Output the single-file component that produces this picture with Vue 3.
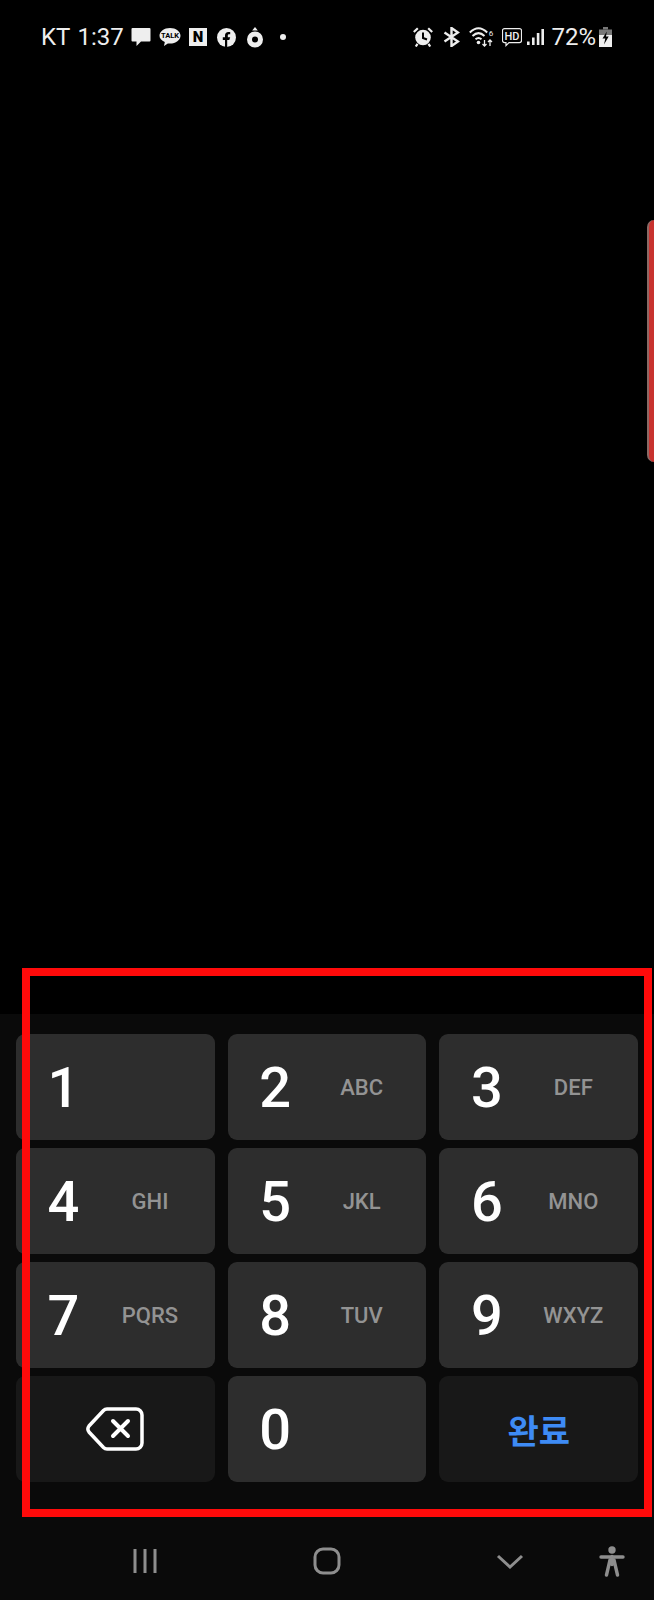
<template>
  <div class="screen">
    <div class="status-bar">
      <span class="status-text carrier">KT</span>
      <span class="status-text clock">1:37</span>
      <svg class="ic-chat" width="20" height="20" viewBox="0 0 20 20"><path d="M1.500 1h17a1 1 0 0 1 1 1v11.500a1 1 0 0 1-1 1H10l-4.500 4.500V14.500h-4a1 1 0 0 1-1-1V2a1 1 0 0 1 1-1z" fill="#eee"/></svg>
      <svg class="ic-talk" width="22" height="20" viewBox="0 0 22 20"><path d="M11 1c5.800 0 10.500 3.500 10.500 7.800S16.800 16.600 11 16.600c-.8 0-1.500-.1-2.200-.2L5 19l.8-4C2.500 13.700.5 11.400.5 8.800.5 4.500 5.200 1 11 1z" fill="#eee"/><text x="11" y="11" text-anchor="middle" class="talk-label">TALK</text></svg>
      <svg class="ic-n" width="18" height="18" viewBox="0 0 18 18"><rect width="18" height="18" fill="#eee"/><text x="9" y="14" text-anchor="middle" class="n-label">N</text></svg>
      <svg class="ic-fb" width="19" height="19" viewBox="0 0 19 19"><circle cx="9.500" cy="9.500" r="9.500" fill="#eee"/><path d="M8 19v-7H5.800V9.300H8V7.400c0-2.300 1.300-3.500 3.400-3.500.9 0 1.800.2 1.800.2v2.200h-1c-1.100 0-1.400.6-1.400 1.300v1.700h2.400L12.300 12h-2.100v7z" fill="#000"/></svg>
      <svg class="ic-ring" width="16" height="21" viewBox="0 0 16 21"><path d="M8 0l2.800 3.500H5.200z" fill="#eee"/><circle cx="8" cy="12.500" r="5.500" fill="none" stroke="#eee" stroke-width="5"/></svg>
      <span class="dot"></span>
      <div class="status-right">
        <svg class="ic-alarm" width="20" height="20" viewBox="0 0 20 20">
          <circle cx="10" cy="10.500" r="7.800" fill="#eee"/>
          <path d="M10 5.500V11L14 12.500" fill="none" stroke="#000" stroke-width="2"/>
          <path d="M.8 5L4.800 1.200M19.200 5L15.200 1.200M4.500 16.800L2.800 19.500M15.500 16.800L17.200 19.500" stroke="#eee" stroke-width="2.200" fill="none"/>
        </svg>
        <svg class="ic-bt" width="17" height="20" viewBox="0 0 17 20"><path d="M1.500 5.500L15 14.500 8.500 19V1L15 5.500 1.500 14.500" fill="none" stroke="#eee" stroke-width="2.400"/></svg>
        <svg class="ic-wifi" width="25" height="20" viewBox="0 0 25 20">
          <path d="M.8 5.500C6.500 0 12.500 0 18.200 5.500M3.500 9C7.500 5.200 11.500 5.200 15.500 9M6.500 12.200C8.500 10.500 10.500 10.500 12.500 12.200" fill="none" stroke="#eee" stroke-width="2"/>
          <circle cx="9.500" cy="15.500" r="1.800" fill="#eee"/>
          <path d="M15.500 13v6M13.500 17l2 2 2-2M21 19v-6M19 15l2-2 2 2" fill="none" stroke="#eee" stroke-width="1.300"/>
          <text x="22" y="9" text-anchor="middle" class="wifi-label">6</text>
        </svg>
        <svg class="ic-hd" width="20" height="19" viewBox="0 0 20 19"><path d="M2.500.6h15a2 2 0 0 1 2 2v10a2 2 0 0 1-2 2H7l-3 3v-3H2.500a2 2 0 0 1-2-2v-10a2 2 0 0 1 2-2z" fill="none" stroke="#eee" stroke-width="1.200"/><text x="10" y="12" text-anchor="middle" class="hd-label">HD</text></svg>
        <svg class="ic-signal" width="17" height="18" viewBox="0 0 17 18"><path d="M0 13.500h2.600V17H0zM5 9.500h2.600V17H5zM9.800 5h2.600v12H9.800zM14.400 1H17v16h-2.600z" fill="#eee"/></svg>
        <span class="status-text battery-text">72%</span>
        <svg class="ic-battery" width="13" height="20" viewBox="0 0 13 20"><path d="M4 0h5v2.500H4z" fill="#777"/><path d="M0 2.500h13V8H0z" fill="#777"/><path d="M0 8h13v12H0z" fill="#eee"/><path d="M7.800 4.500L3.500 11.500h2.800L5 17.500l4.700-8H7z" fill="#000"/></svg>
      </div>
    </div>

    <div class="spacer"></div>

    <div class="keypad">
      <div class="keys">
        <button v-for="k in keys" :key="k.digit" class="key">
          <span class="digit">{{ k.digit }}</span>
          <span class="letters">{{ k.letters }}</span>
        </button>
        <button class="key key-dark key-center">
          <svg width="58" height="44" viewBox="0 0 58 44"><path d="M21 2h29a6 6 0 0 1 6 6v28a6 6 0 0 1-6 6H21a5 5 0 0 1-3.500-1.500L3 25a5 5 0 0 1 0-6L17.500 3.500A5 5 0 0 1 21 2z" fill="none" stroke="#fff" stroke-width="3.500"/><path d="M27 14l15 15M42 14L27 29" stroke="#fff" stroke-width="4" stroke-linecap="round" fill="none"/></svg>
        </button>
        <button class="key">
          <span class="digit">0</span>
          <span class="letters"></span>
        </button>
        <button class="key key-dark key-center">
          <span class="done">완료</span>
        </button>
      </div>

      <div class="nav-bar">
        <svg class="nav-recents" width="24" height="26" viewBox="0 0 24 26"><path d="M2 1v24M12 1v24M22 1v24" stroke="#8e8e8e" stroke-width="3" fill="none"/></svg>
        <svg class="nav-home" width="28" height="28" viewBox="0 0 28 28"><rect x="2" y="2" width="24" height="24" rx="8" fill="none" stroke="#8e8e8e" stroke-width="3"/></svg>
        <svg class="nav-back" width="28" height="15" viewBox="0 0 28 15"><path d="M2 2l12 11L26 2" fill="none" stroke="#8e8e8e" stroke-width="3"/></svg>
        <svg class="nav-access" width="26" height="31" viewBox="0 0 26 31"><circle cx="13" cy="4" r="3.700" fill="#8e8e8e"/><path d="M2 11h22" stroke="#8e8e8e" stroke-width="3.400" stroke-linecap="round"/><path d="M13 10.500v8M11 14L7.500 29M15 14l3.500 15" stroke="#8e8e8e" stroke-width="3.400" stroke-linecap="round" fill="none"/></svg>
      </div>
    </div>

    <div class="edge-handle"></div>
    <div class="highlight"></div>
  </div>
</template>

<script setup>
const keys = [
  { digit: '1', letters: '' },
  { digit: '2', letters: 'ABC' },
  { digit: '3', letters: 'DEF' },
  { digit: '4', letters: 'GHI' },
  { digit: '5', letters: 'JKL' },
  { digit: '6', letters: 'MNO' },
  { digit: '7', letters: 'PQRS' },
  { digit: '8', letters: 'TUV' },
  { digit: '9', letters: 'WXYZ' }
]
</script>

<style>
html, body {
  background: #000;
}
</style>

<style scoped>
.screen {
  position: relative;
  display: flex;
  flex-direction: column;
  width: 654px;
  height: 1600px;
  background: #000;
  overflow: hidden;
  font-family: Roboto, "Noto Sans CJK KR", sans-serif;
}

.status-bar {
  display: flex;
  align-items: center;
  height: 28px;
  margin-top: 23px;
  padding-left: 41px;
  padding-right: 42px;
  flex-shrink: 0;
}

.status-text {
  color: #eee;
  font-size: 24px;
  line-height: 28px;
}

.clock { margin-left: 7px; }
.ic-chat { margin-left: 7px; }
.ic-talk { margin-left: 8px; }
.ic-n { margin-left: 8px; }
.ic-fb { margin-left: 10px; }
.ic-ring { margin-left: 11px; }

.dot {
  width: 6px;
  height: 6px;
  margin-left: 17px;
  border-radius: 50%;
  background: #eee;
}

.status-right {
  display: flex;
  align-items: center;
  margin-left: auto;
}

.ic-bt { margin-left: 10px; }
.ic-wifi { margin-left: 9px; }
.ic-hd { margin-left: 8px; }
.ic-signal { margin-left: 5px; }
.battery-text { margin-left: 7px; }
.ic-battery { margin-left: 3px; }

.talk-label {
  font: 700 7.500px Roboto, sans-serif;
  fill: #000;
}

.n-label {
  font: 900 15px Roboto, sans-serif;
  fill: #000;
}

.wifi-label {
  font: 400 8px Roboto, sans-serif;
  fill: #eee;
}

.hd-label {
  font: 500 11px Roboto, sans-serif;
  fill: #eee;
}

.spacer {
  flex: 1;
}

.keypad {
  flex-shrink: 0;
  height: 586px;
  padding: 20px 16px 0;
  box-sizing: border-box;
  background: #0a0a0a;
}

.keys {
  display: grid;
  grid-template-columns: repeat(3, 1fr);
  grid-auto-rows: 106px;
  gap: 8px 13px;
}

.key {
  display: grid;
  grid-template-columns: 92px 84px;
  align-items: center;
  justify-items: center;
  padding: 0;
  border: none;
  border-radius: 9px;
  background: #2d2d2d;
  font-family: inherit;
}

.key-dark {
  background: #181818;
}

.key-center {
  display: flex;
  justify-content: center;
}

.digit {
  margin-top: 2px;
  margin-left: 3px;
  color: #fff;
  font-size: 56px;
  font-weight: 500;
  line-height: 1;
}

.letters {
  color: #939393;
  font-size: 22px;
  font-weight: 500;
}

.done {
  color: #3e8bf5;
  font-size: 34px;
  font-weight: 700;
  font-family: "Noto Sans CJK KR", sans-serif;
}

.nav-bar {
  display: flex;
  align-items: center;
  height: 34px;
  margin-top: 62px;
  padding-left: 117px;
}

.nav-home { margin-left: 156px; }
.nav-back { margin-left: 155px; }
.nav-access { margin-left: 75px; }

.edge-handle {
  position: absolute;
  top: 220px;
  right: 0;
  width: 7px;
  height: 242px;
  box-sizing: border-box;
  border-left: 2px solid #8a6a66;
  border-radius: 7px 0 0 7px;
  background: #c8322e;
}

.highlight {
  position: absolute;
  top: 968px;
  left: 22px;
  width: 630px;
  height: 549px;
  box-sizing: border-box;
  border: 8px solid #ff0a0a;
  pointer-events: none;
}
</style>
